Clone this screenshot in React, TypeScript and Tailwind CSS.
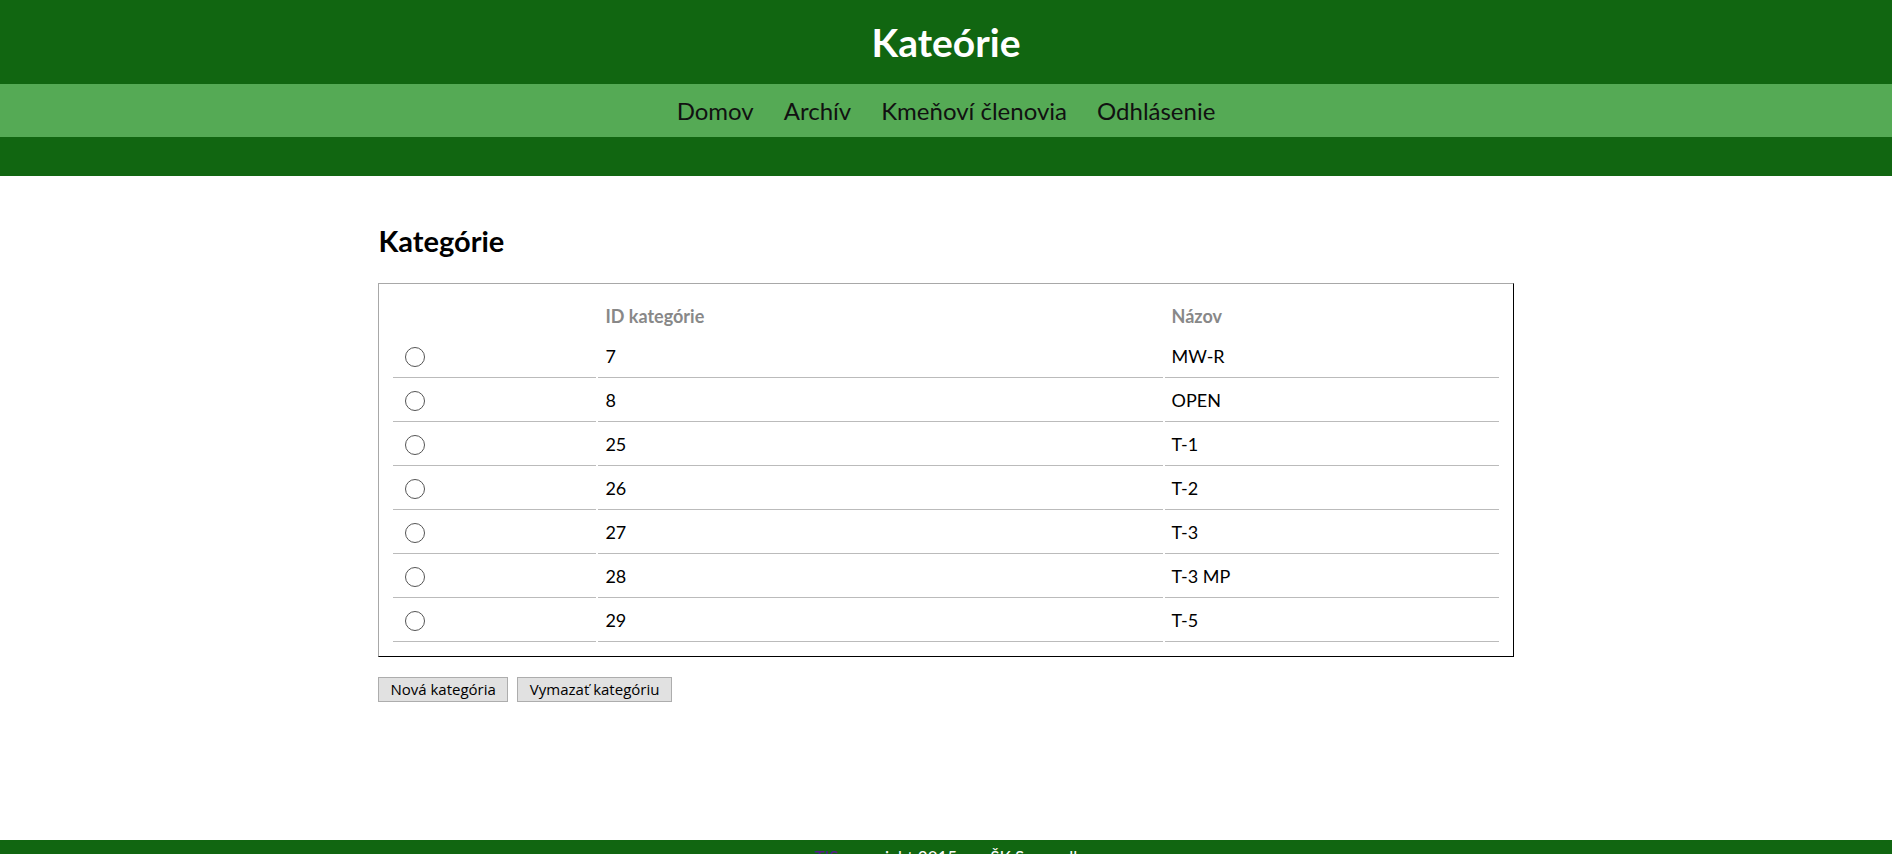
const rows = [
  { id: "7", name: "MW-R" },
  { id: "8", name: "OPEN" },
  { id: "25", name: "T-1" },
  { id: "26", name: "T-2" },
  { id: "27", name: "T-3" },
  { id: "28", name: "T-3 MP" },
  { id: "29", name: "T-5" },
];

const menu = ["Domov", "Archív", "Kmeňoví členovia", "Odhlásenie"];

export default function App() {
  return (
    <div className="font-[Lato,sans-serif] bg-white text-black">
      <header>
        <div className="h-[84px] bg-[#116611] flex items-center justify-center">
          <h1 className="text-[39px] font-bold text-white leading-none">Kateórie</h1>
        </div>
        <nav className="h-[53px] bg-[#55aa55] flex items-center justify-center gap-[30px] text-[24px] text-[#111]">
          {menu.map((m) => (
            <a key={m} href="#" className="leading-none">
              {m}
            </a>
          ))}
        </nav>
        <div className="h-[39px] bg-[#116611]" />
      </header>

      <main className="h-[664px]">
        <div className="w-[60%] mx-auto pt-12">
          <h2 className="text-[29px] font-bold leading-[34px] mb-[25px]">Kategórie</h2>
          <div className="border-t border-l border-[#a8a8a8] border-r border-b border-r-black border-b-black p-3">
            <table className="w-full border-separate border-spacing-[2px] text-[18px]">
              <thead>
                <tr className="h-[36px]">
                  <th className="w-[203px]" />
                  <th className="text-left font-bold text-[#888] px-[7px]">ID kategórie</th>
                  <th className="w-[334px] text-left font-bold text-[#888] px-[7px]">Názov</th>
                </tr>
              </thead>
              <tbody>
                {rows.map((r) => (
                  <tr key={r.id} className="h-[42px]">
                    <td className="border-b border-[#bbb] pl-3">
                      <span className="block w-5 h-5 rounded-full border border-[#555] bg-white" />
                    </td>
                    <td className="border-b border-[#bbb] px-[7px] text-[#000]">{r.id}</td>
                    <td className="border-b border-[#bbb] px-[7px] text-[#000]">{r.name}</td>
                  </tr>
                ))}
              </tbody>
            </table>
          </div>
          <div className="flex gap-[9px] mt-5 font-['Open_Sans',sans-serif] text-[15px]">
            <button className="h-[25px] px-[11px] bg-[#e1e1e1] border border-[#adadad] leading-none">Nová kategória</button>
            <button className="h-[25px] px-[12px] bg-[#e1e1e1] border border-[#adadad] leading-none">Vymazať kategóriu</button>
          </div>
        </div>
      </main>

      <footer className="bg-[#116611] text-white text-[17px] text-center pt-[5px] pb-4">
        <a href="#" className="text-[#551a8b]">TIS</a> copyright 2015 pre ŠK Senovall
      </footer>
    </div>
  );
}
